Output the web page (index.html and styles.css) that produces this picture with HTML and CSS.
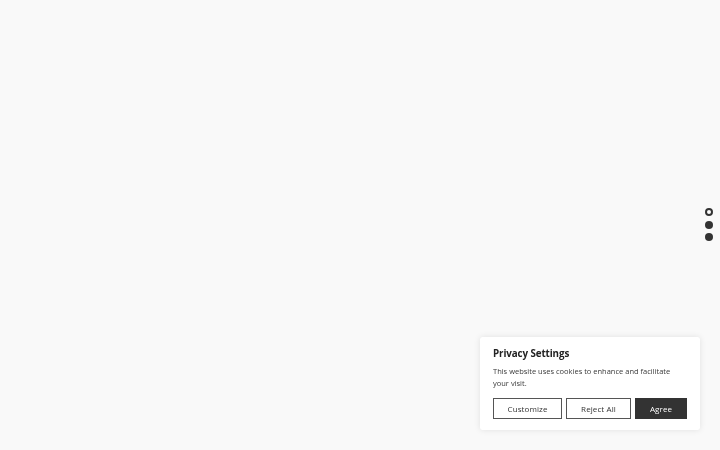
FILE: index.html
```html
<!DOCTYPE html>
<html>
<head>
<meta charset="utf-8">
<link rel="stylesheet" href="styles.css">
</head>
<body>
<nav class="dots">
  <span class="dot dot-active"></span>
  <span class="dot"></span>
  <span class="dot"></span>
</nav>
<div class="consent">
  <h2 class="consent-title">Privacy Settings</h2>
  <p class="consent-text">This website uses cookies to enhance and facilitate your visit.</p>
  <div class="consent-actions">
    <button class="btn btn-outline btn-customize">Customize</button>
    <button class="btn btn-outline btn-reject">Reject All</button>
    <button class="btn btn-dark btn-agree">Agree</button>
  </div>
</div>
</body>
</html>
```
FILE: styles.css
```css
html, body {
  margin: 0;
  padding: 0;
  width: 720px;
  height: 450px;
  background: #f9f9f9;
  font-family: "Open Sans", Lato, sans-serif;
  overflow: hidden;
}
.dots {
  position: fixed;
  right: 7px;
  top: 208px;
  display: flex;
  flex-direction: column;
  gap: 4.5px;
}
.dot {
  width: 8px;
  height: 8px;
  border-radius: 50%;
  background: #333;
  box-sizing: border-box;
}
.dot-active {
  background: #fff;
  border: 2px solid #333;
}
.consent {
  position: fixed;
  left: 480px;
  top: 337px;
  width: 220px;
  height: 93px;
  box-sizing: border-box;
  background: #fff;
  border-radius: 3px;
  box-shadow: 0 0 6px rgba(0,0,0,0.10);
  padding: 10px 13px 0 13px;
}
.consent-title {
  margin: 0;
  font-size: 9.8px;
  font-weight: 700;
  color: #222;
  line-height: 14px;
  letter-spacing: -0.1px;
}
.consent-text {
  margin: 4px 0 0 0;
  font-size: 7.5px;
  line-height: 12px;
  color: #3a3a3a;
  letter-spacing: 0;
}
.consent-actions {
  display: flex;
  gap: 4px;
  margin-top: 9px;
}
.btn {
  height: 21px;
  box-sizing: border-box;
  font-family: inherit;
  font-size: 8px;
  padding: 0;
  border-radius: 0;
  letter-spacing: 0.1px;
  cursor: pointer;
}
.btn-outline {
  background: #fff;
  border: 1.5px solid #555;
  color: #333;
}
.btn-dark {
  background: #333;
  border: 1.5px solid #333;
  color: #fff;
}
.btn-customize { width: 69px; }
.btn-reject { width: 65px; }
.btn-agree { width: 52px; }
```
